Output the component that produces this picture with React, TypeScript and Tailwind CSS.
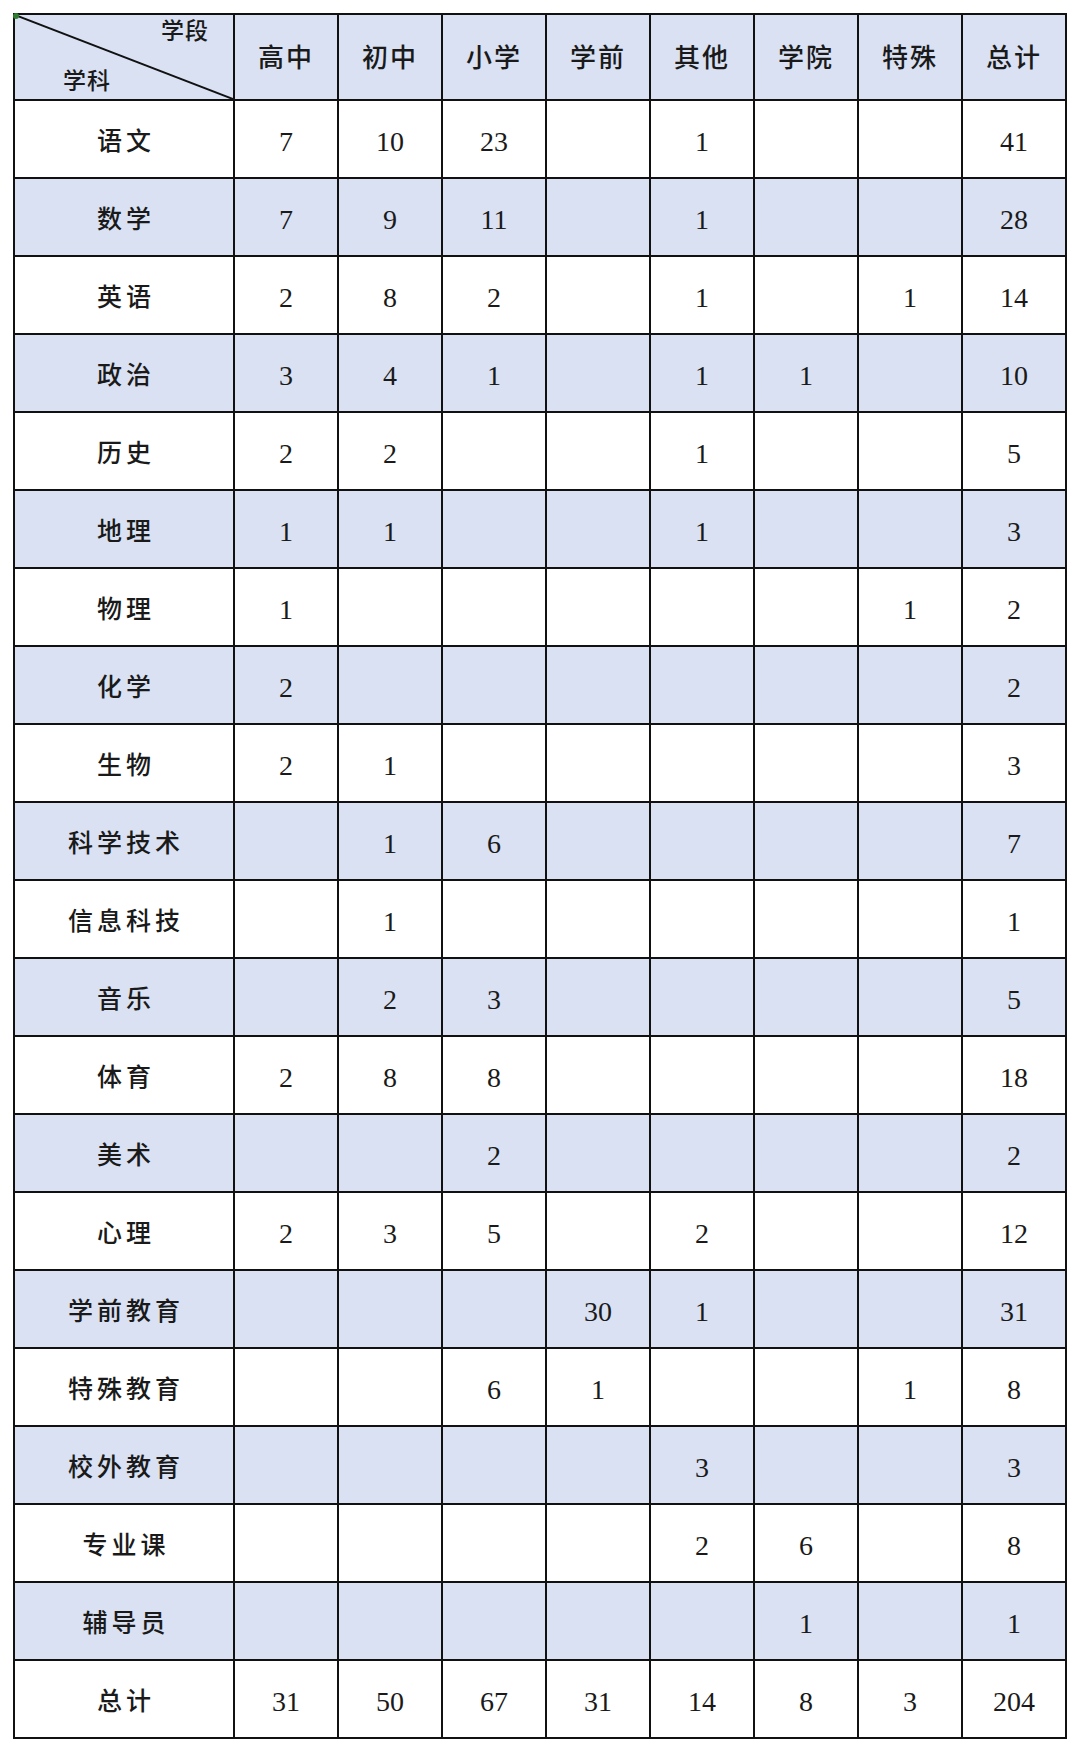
const stages = ['高中', '初中', '小学', '学前', '其他', '学院', '特殊', '总计'];

const rows: [string, (number | null)[]][] = [
  ['语文', [7, 10, 23, null, 1, null, null, 41]],
  ['数学', [7, 9, 11, null, 1, null, null, 28]],
  ['英语', [2, 8, 2, null, 1, null, 1, 14]],
  ['政治', [3, 4, 1, null, 1, 1, null, 10]],
  ['历史', [2, 2, null, null, 1, null, null, 5]],
  ['地理', [1, 1, null, null, 1, null, null, 3]],
  ['物理', [1, null, null, null, null, null, 1, 2]],
  ['化学', [2, null, null, null, null, null, null, 2]],
  ['生物', [2, 1, null, null, null, null, null, 3]],
  ['科学技术', [null, 1, 6, null, null, null, null, 7]],
  ['信息科技', [null, 1, null, null, null, null, null, 1]],
  ['音乐', [null, 2, 3, null, null, null, null, 5]],
  ['体育', [2, 8, 8, null, null, null, null, 18]],
  ['美术', [null, null, 2, null, null, null, null, 2]],
  ['心理', [2, 3, 5, null, 2, null, null, 12]],
  ['学前教育', [null, null, null, 30, 1, null, null, 31]],
  ['特殊教育', [null, null, 6, 1, null, null, 1, 8]],
  ['校外教育', [null, null, null, null, 3, null, null, 3]],
  ['专业课', [null, null, null, null, 2, 6, null, 8]],
  ['辅导员', [null, null, null, null, null, 1, null, 1]],
  ['总计', [31, 50, 67, 31, 14, 8, 3, 204]],
];

export default function App() {
  return (
    <div
      className="w-[1080px] h-[1753px] bg-white pl-[13px] pt-[13px] text-[#1a1a1a]"
      style={{ fontFamily: '"Liberation Serif", "Noto Sans CJK SC", serif' }}
    >
      <table className="w-[1052px] border-collapse table-fixed border-2 border-[#111]">
        <colgroup>
          <col className="w-[220px]" />
          {stages.map((s) => (
            <col key={s} className="w-[104px]" />
          ))}
        </colgroup>
        <thead>
          <tr className="h-[86px] bg-[#d9e1f2]">
            <th className="relative border-2 border-[#111] p-0 font-medium">
              <svg className="absolute inset-0 w-full h-full" viewBox="0 0 218 84" preserveAspectRatio="none">
                <line x1="0" y1="0" x2="218" y2="84" stroke="#111" strokeWidth="2" />
              </svg>
              <div className="absolute -left-[2px] -top-[2px] w-[6px] h-[6px] bg-[#2e7d32] rounded-full" />
              <span className="absolute right-[24px] top-[0px] text-[23px] tracking-[1px]">学段</span>
              <span className="absolute left-[48px] bottom-[0px] text-[23px] tracking-[1px]">学科</span>
            </th>
            {stages.map((s) => (
              <th key={s} className="border-2 border-[#111] font-medium text-[26px] tracking-[2px] text-center pt-[2px]">
                {s}
              </th>
            ))}
          </tr>
        </thead>
        <tbody>
          {rows.map(([name, vals], i) => (
            <tr key={name} className={`h-[78px] ${i % 2 === 1 ? 'bg-[#d9e1f2]' : 'bg-white'}`}>
              <td className="border-2 border-[#111] text-center font-medium text-[25px] tracking-[4px] pl-[4px] pt-[6px]">
                {name}
              </td>
              {vals.map((v, j) => (
                <td key={j} className="border-2 border-[#111] text-center text-[28px] pt-[6px]">
                  {v ?? ''}
                </td>
              ))}
            </tr>
          ))}
        </tbody>
      </table>
    </div>
  );
}
